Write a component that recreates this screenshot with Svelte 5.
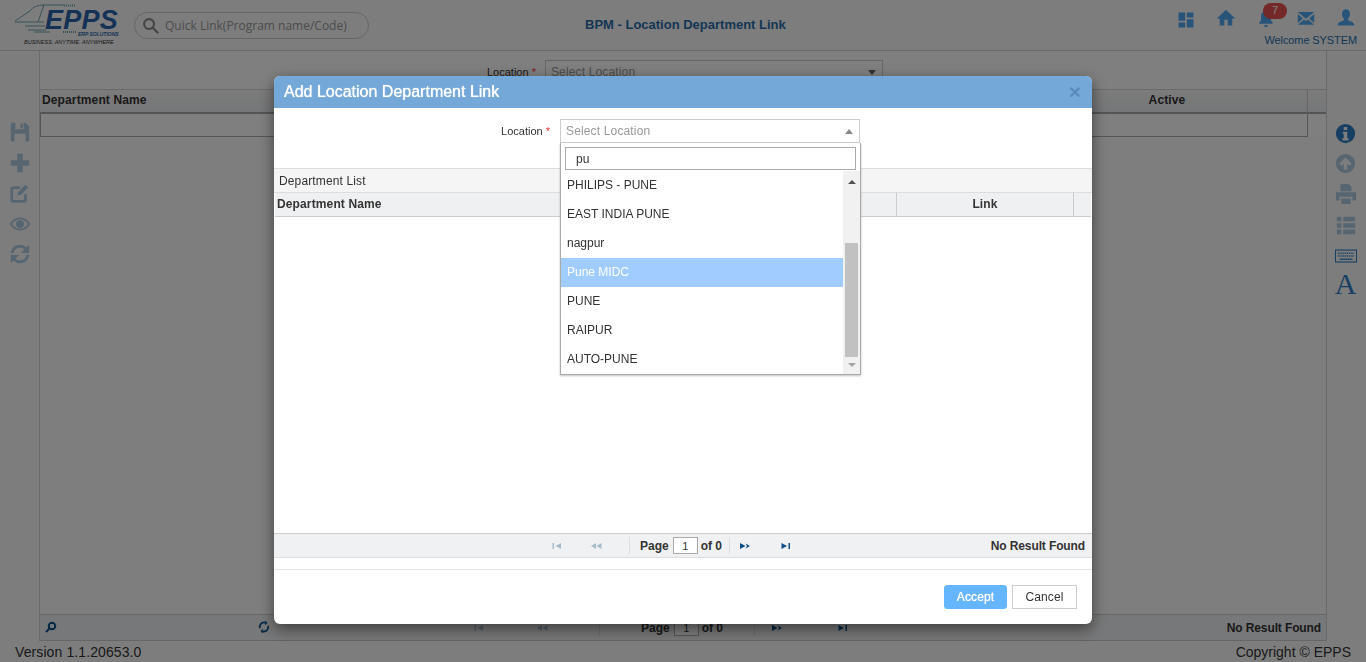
<script>
  const locations = ['PHILIPS - PUNE', 'EAST INDIA PUNE', 'nagpur', 'Pune MIDC', 'PUNE', 'RAIPUR', 'AUTO-PUNE'];

  const leftTools = [
    'M2 2h16l4 4v16H2z M7 2v7h9V2z M12.500 3h2.500v5h-2.500z M6 14v8h12v-8z',
    'M9 2h6v7h7v6h-7v7H9v-7H2V9h7z',
    null,
    'M12 5C6.500 5 2.500 8.500 1 12c1.500 3.500 5.500 7 11 7s9.500-3.500 11-7c-1.500-3.500-5.500-7-11-7z M12 6.800c-4 0-7.200 2.400-8.800 5.200 1.600 2.800 4.800 5.200 8.800 5.200s7.200-2.400 8.800-5.200c-1.600-2.800-4.800-5.200-8.800-5.200z M12 7.500a4.500 4.500 0 1 0 0 9 4.500 4.500 0 0 0 0-9z',
    null
  ];
</script>

{#snippet pagerIcon(kind, dim)}
  <svg class="pg-icon" class:dim viewBox="0 0 12 8" width="12" height="8">
    {#if kind === 'first'}
      <path d="M1.500 1h1.500v6H1.500z M10 1v6L4.500 4z" />
    {:else if kind === 'prev'}
      <path d="M6 1v6L1 4z M11.500 1v6L6.500 4z" />
    {:else if kind === 'next'}
      <path d="M1 1v6l5.500-3z M6.500 1.500 11 4 6.500 6.500 8 4z" />
    {:else}
      <path d="M1.500 1v6L7 4z M8.500 1H10v6H8.500z" />
    {/if}
  </svg>
{/snippet}

{#snippet pager(result)}
  <div class="pg-tools">
    <span class="pg-btn first">{@render pagerIcon('first', true)}</span>
    <span class="pg-btn prev">{@render pagerIcon('prev', true)}</span>
    <span class="pg-sep before"></span>
    <span class="pg-label">Page</span>
    <span class="pg-input">1</span>
    <span class="pg-label">of 0</span>
    <span class="pg-sep after"></span>
    <span class="pg-btn next">{@render pagerIcon('next', false)}</span>
    <span class="pg-btn last">{@render pagerIcon('last', false)}</span>
  </div>
  <span class="pg-result">{result}</span>
{/snippet}

<div class="page">
  <header class="topbar">
    <div class="logo">
      <svg class="logo-art" viewBox="0 0 64 34" width="64" height="34" fill="none" stroke="#6fa3b3" stroke-width="1">
        <path d="M1 19 16 9Q20 3 30 3H50" />
        <path d="M1 20H30M30 3 24 20" />
        <path d="M11 24H31M14 28H32M20 30H36" />
        <path d="M50 3.500H62M49 30H63" stroke-width="2" stroke-dasharray="1 1" />
      </svg>
      <span class="logo-name">EPPS</span>
      <span class="logo-erp">ERP SOLUTIONS</span>
      <span class="logo-tag">BUSINESS. ANYTIME. ANYWHERE</span>
    </div>
    <div class="quick">
      <svg viewBox="0 0 24 24" width="17" height="17" fill="none" stroke="#8a8a8a" stroke-width="3">
        <circle cx="10" cy="10" r="7" />
        <path d="M15 15l7 7" stroke-linecap="round" />
      </svg>
      <span>Quick Link(Program name/Code)</span>
    </div>
    <h1 class="title">BPM - Location Department Link</h1>
    <div class="top-right">
      <div class="top-icons">
        <svg class="ic-dash" viewBox="0 0 24 24" width="20" height="20"><path d="M3 13h8V3H3zm0 8h8v-6H3zm10 0h8V11h-8zm0-18v6h8V3z" /></svg>
        <svg viewBox="0 0 24 24" width="20" height="20"><path d="M10 21v-7h4v7h5.500v-8.500H23L12 2 1 12.500h3.500V21z" /></svg>
        <span class="bell">
          <svg viewBox="0 0 24 24" width="20" height="20"><path d="M12 23a2.500 2.500 0 0 0 2.500-2.500h-5A2.500 2.500 0 0 0 12 23zm8-6-2-2V10c0-3-1.600-5.600-4.500-6.300V2.500h-3v1.200C7.600 4.400 6 7 6 10v5l-2 2v2h16z" /></svg>
          <span class="badge">7</span>
        </span>
        <svg viewBox="0 0 24 24" width="18" height="18"><path d="M1 4h22L12 13z M1 6.500 8 12.500 1 18.500z M23 6.500 16 12.500 23 18.500z M1 21l8.500-7 2.500 2 2.500-2 8.500 7z" /></svg>
        <svg viewBox="0 0 24 24" width="20" height="20"><path d="M12 1.500c3 0 4.800 2.500 4.800 5.500 0 2.500-1 4.600-2.300 5.800v2c1.500 1 7.500 1.700 7.500 6.200H2c0-4.500 6-5.200 7.500-6.200v-2C8.200 11.600 7.200 9.500 7.200 7c0-3 1.800-5.500 4.800-5.500z" /></svg>
      </div>
      <div class="welcome">Welcome SYSTEM</div>
    </div>
  </header>

  <div class="middle">
    <aside class="rail rail-left">
      {#each leftTools as d, i}
        {#if i === 2}
          <svg viewBox="0 0 24 24" width="22" height="22" fill="none" stroke="#aecbe2" stroke-width="3">
            <path d="M18 13v6a2 2 0 0 1-2 2H5a2 2 0 0 1-2-2V8a2 2 0 0 1 2-2h7" />
            <path d="M9 15l1-4 8-8 3 3-8 8z" fill="#aecbe2" stroke="none" />
          </svg>
        {:else if i === 4}
          <svg viewBox="0 0 24 24" width="22" height="22" fill="none" stroke="#aecbe2" stroke-width="3">
            <path d="M3.500 11A8.500 8.500 0 0 1 18 6l2.500 3" />
            <path d="M20.500 13A8.500 8.500 0 0 1 6 18l-2.500-3" />
            <path d="M22 2v9h-9z M2 22v-9h9z" fill="#aecbe2" stroke="none" />
          </svg>
        {:else}
          <svg viewBox="0 0 24 24" width="22" height="22"><path fill="#aecbe2" fill-rule="evenodd" d={d} /></svg>
        {/if}
      {/each}
    </aside>

    <main class="content">
      <div class="bg-filter">
        <span class="bg-label">Location <em>*</em></span>
        <span class="bg-select">Select Location<i class="caret-down"></i></span>
      </div>
      <div class="bg-head">
        <span class="bg-name">Department Name</span>
        <span class="bg-active">Active</span>
        <span class="bg-end"></span>
      </div>
      <div class="bg-row"></div>
      <div class="bg-grow"></div>
      <div class="bg-pager">
        <svg class="bg-find" viewBox="0 0 24 24" width="12" height="12" fill="none" stroke="#0b4f86" stroke-width="4">
          <circle cx="14" cy="10" r="6.500" />
          <path d="M9 15l-7 7" />
        </svg>
        <svg class="bg-reload" viewBox="0 0 24 24" width="14" height="14" fill="none" stroke="#0b4f86" stroke-width="3">
          <path d="M5 14a7.500 7.500 0 0 1 9-9.500M19 10a7.500 7.500 0 0 1-9 9.500" />
          <path d="M14 1v8l4-4zM10 23v-8l-4 4z" fill="#0b4f86" stroke="none" />
        </svg>
        {@render pager('No Result Found')}
      </div>
    </main>

    <aside class="rail rail-right">
      <svg viewBox="0 0 24 24" width="21" height="21"><path fill="#2f7fc8" fill-rule="evenodd" d="M12 1a11 11 0 1 0 0 22 11 11 0 0 0 0-22z M10 4.500h4v3.500h-4z M9 10h5v7.500h1.500V20h-7v-2.500H10V12.500H9z" /></svg>
      <svg viewBox="0 0 24 24" width="21" height="21"><path fill="#aecbe2" fill-rule="evenodd" d="M12 1a11 11 0 1 0 0 22 11 11 0 0 0 0-22z M12 5l7 7-2.500 2.500-2.500-2.500v7h-4v-7l-2.500 2.500L5 12z" /></svg>
      <svg viewBox="0 0 24 24" width="22" height="22"><path fill="#aecbe2" fill-rule="evenodd" d="M6 1h9l3 3v5H6z M1 10h22v9h-4v-4H5v4H1z M7 17h10v6H7z" /></svg>
      <svg viewBox="0 0 24 24" width="22" height="22"><path fill="#aecbe2" d="M2 3h5v5H2zM9 3h13v5H9zM2 10h5v5H2zM9 10h13v5H9zM2 17h5v5H2zM9 17h13v5H9z" /></svg>
      <svg class="keyboard" viewBox="0 0 24 14" width="22" height="14" fill="none" stroke="#2f7fc8">
        <rect x="0.500" y="0.500" width="23" height="13" stroke-width="1.200" />
        <path d="M3 4h18M3 7h18" stroke-width="1.500" stroke-dasharray="1.200 .8" />
        <path d="M5 10.500h14" stroke-width="1.400" />
      </svg>
      <span class="font-a">A</span>
    </aside>
  </div>

  <footer class="statusbar">
    <span class="version">Version 1.1.20653.0</span>
    <span>Copyright © EPPS</span>
  </footer>
</div>

<div class="overlay"></div>

<section class="modal">
  <div class="modal-head">
    <h2>Add Location Department Link</h2>
    <span class="close">×</span>
  </div>
  <div class="form-row">
    <label for="loc-search">Location <em>*</em></label>
    <div class="select-wrap">
      <div class="select-box">Select Location<i class="caret-up"></i></div>
      <div class="dropdown">
        <div class="search-wrap"><input id="loc-search" value="pu" /></div>
        <div class="options">
          <ul>
            {#each locations as loc}
              <li class:active={loc === 'Pune MIDC'}>{loc}</li>
            {/each}
          </ul>
          <div class="scrollbar">
            <i class="sb-up"></i>
            <div class="sb-track"><div class="sb-thumb"></div></div>
            <i class="sb-down"></i>
          </div>
        </div>
      </div>
    </div>
  </div>
  <div class="panel-title">Department List</div>
  <div class="grid-head">
    <span class="gh-name">Department Name</span>
    <span class="gh-link">Link</span>
    <span class="gh-end"></span>
  </div>
  <div class="grid-body"></div>
  <div class="grid-pager">
    {@render pager('No Result Found')}
  </div>
  <div class="modal-gap"></div>
  <div class="modal-foot">
    <button class="btn-accept">Accept</button>
    <button class="btn-cancel">Cancel</button>
  </div>
</section>

<style>
  :global(body) {
    margin: 0;
    font-family: "Liberation Sans", Arial, sans-serif;
    color: #333;
    overflow: hidden;
  }

  .page {
    height: 662px;
    display: flex;
    flex-direction: column;
    background: #fbfbfb;
  }

  /* top bar */
  .topbar {
    height: 50px;
    flex: none;
    display: flex;
    align-items: flex-start;
    border-bottom: 1px solid #d5d5d5;
    position: relative;
  }

  .logo {
    width: 134px;
    height: 50px;
    flex: none;
    position: relative;
  }

  .logo-art { position: absolute; left: 14px; top: 2px; }

  .logo-name {
    position: absolute;
    left: 45px;
    top: 9px;
    font: italic bold 27px/22px "Liberation Sans", sans-serif;
    color: #2a64ad;
    letter-spacing: 0.2px;
  }

  .logo-erp {
    position: absolute;
    left: 78px;
    top: 31px;
    font: italic bold 5px/6px "Liberation Sans", sans-serif;
    color: #2a64ad;
  }

  .logo-tag {
    position: absolute;
    left: 24px;
    top: 39px;
    font: italic 5.500px/7px "Liberation Sans", sans-serif;
    color: #333;
    white-space: nowrap;
  }

  .quick {
    width: 235px;
    height: 27px;
    margin-top: 12px;
    box-sizing: border-box;
    border: 1px solid #ccc;
    border-radius: 14px;
    display: flex;
    align-items: center;
    gap: 6px;
    padding-left: 7px;
    font: 12px "Open Sans", sans-serif;
    color: #999;
  }

  .title {
    margin: 17px 0 0 216px;
    font-size: 13px;
    font-weight: bold;
    line-height: 16px;
    color: #2a6da8;
  }

  .top-right {
    margin-left: auto;
    width: 200px;
    flex: none;
  }

  .top-icons {
    height: 35px;
    display: grid;
    grid-template-columns: repeat(5, 40px);
    align-items: center;
    justify-items: center;
  }

  .top-icons svg { fill: #50a8f5; display: block; }
  .top-icons .ic-dash { margin-top: 4px; }

  .bell { position: relative; display: block; }

  .badge {
    position: absolute;
    left: 7px;
    top: -5px;
    width: 24px;
    height: 16px;
    border-radius: 8px;
    background: #e85050;
    color: #fff;
    font-size: 11px;
    line-height: 15px;
    text-align: center;
  }

  .welcome {
    font-size: 11px;
    line-height: 12px;
    letter-spacing: -0.1px;
    margin-top: -1px;
    text-align: right;
    padding-right: 9px;
    color: #2a6da8;
  }

  /* behind the dialog */
  .middle {
    flex: 1;
    display: flex;
    min-height: 0;
  }

  .rail {
    width: 39px;
    flex: none;
    display: flex;
    flex-direction: column;
    align-items: center;
  }

  .rail-left {
    padding-top: 70px;
    gap: 8.5px;
    border-right: 1px solid #d5d5d5;
  }

  .rail-right {
    padding-top: 72px;
    padding-right: 2px;
    box-sizing: content-box;
    width: 37px;
    gap: 9px;
    border-left: 1px solid #d5d5d5;
  }

  .keyboard { margin-top: 4px; }

  .font-a {
    font: 30px/28px "Liberation Serif", serif;
    color: #2f7fc8;
    margin-top: -2px;
  }

  .content {
    flex: 1;
    display: flex;
    flex-direction: column;
    min-width: 0;
    background: #fff;
  }

  .bg-filter {
    height: 38px;
    box-sizing: border-box;
    padding: 9px 0 0 447px;
    display: flex;
    gap: 9px;
    font-size: 11px;
  }

  .bg-label { line-height: 24px; }
  .bg-label em, label em { color: #f33; font-style: normal; }

  .bg-select {
    width: 338px;
    height: 24px;
    box-sizing: border-box;
    border: 1px solid #ccc;
    padding-left: 5px;
    line-height: 22px;
    font-size: 12px;
    letter-spacing: 0.15px;
    color: #999;
    position: relative;
  }

  .caret-down {
    position: absolute;
    right: 6px;
    top: 9px;
    border: 4px solid transparent;
    border-top: 5px solid #666;
    border-bottom: 0;
  }

  .bg-head {
    height: 20px;
    padding-bottom: 2px;
    display: flex;
    align-items: center;
    border-top: 1px solid #d5d5d5;
    border-bottom: 2px solid #aaa;
    background: linear-gradient(#f7f7f8, #eceef0);
    font-size: 12px;
    font-weight: bold;
    letter-spacing: 0.13px;
  }

  .bg-name { padding-left: 2px; }
  .bg-active { margin-left: auto; width: 280px; text-align: center; }
  .bg-end { width: 18px; align-self: stretch; border-left: 1px solid #ccc; margin-bottom: -2px; }

  .bg-row {
    height: 22px;
    margin-right: 18px;
    border: 1px solid #aaa;
    border-top: 0;
    background: #fff;
  }

  .bg-grow { flex: 1; background: #fcfcfc; }

  .bg-pager {
    height: 25px;
    flex: none;
    position: relative;
    border-top: 1px solid #ccc;
    border-bottom: 1px solid #ccc;
    background: #eff0f2;
    display: flex;
    align-items: center;
    justify-content: flex-end;
    padding-right: 5px;
  }

  .bg-find { position: absolute; left: 5px; top: 6px; }
  .bg-reload { position: absolute; left: 217px; top: 5px; }

  .bg-pager .pg-tools { left: 407px; }
  .bg-pager .pg-btn.first, .bg-pager .pg-btn.prev { width: 63px; }
  .bg-pager .pg-btn.next { width: 44px; }
  .bg-pager .pg-btn.last { width: 88px; }
  .bg-pager .pg-sep.before { margin: 0 41px 0 26px; }
  .bg-pager .pg-sep.after { margin: 0 0 0 31px; }

  .statusbar {
    height: 20px;
    flex: none;
    display: flex;
    justify-content: space-between;
    align-items: center;
    padding: 1px 15px 0;
    font-size: 14px;
    background: #fbfbfb;
  }

  .version { letter-spacing: 0.1px; }

  .overlay {
    position: fixed;
    inset: 0;
    background: rgba(0, 0, 0, 0.5);
  }

  /* dialog */
  .modal {
    position: fixed;
    left: 274px;
    top: 76px;
    width: 818px;
    height: 548px;
    display: flex;
    flex-direction: column;
    background: #fff;
    border-radius: 6px;
    box-shadow: 0 5px 15px rgba(0, 0, 0, 0.5);
  }

  .modal-head {
    height: 32px;
    flex: none;
    display: flex;
    align-items: center;
    justify-content: space-between;
    padding: 0 10px;
    background: #74a8d8;
    border-radius: 6px 6px 0 0;
  }

  .modal-head h2 {
    margin: 0;
    font-size: 16px;
    font-weight: normal;
    color: #fff;
    text-shadow: 0 0 1px #fff;
  }

  .close {
    font-size: 21px;
    font-weight: bold;
    color: #5a8cbc;
    line-height: 28px;
    margin-right: 1px;
  }

  .form-row {
    height: 60px;
    flex: none;
    display: flex;
    padding-top: 11px;
    box-sizing: border-box;
  }

  .form-row label {
    width: 276px;
    text-align: right;
    font-size: 11px;
    line-height: 24px;
    flex: none;
  }

  .select-wrap {
    margin-left: 10px;
    width: 300px;
    position: relative;
  }

  .select-box {
    height: 24px;
    box-sizing: border-box;
    border: 1px solid #ccc;
    padding-left: 5px;
    font-size: 12px;
    letter-spacing: 0.15px;
    line-height: 22px;
    color: #999;
    position: relative;
  }

  .caret-up {
    position: absolute;
    right: 6px;
    top: 9px;
    border: 4px solid transparent;
    border-bottom: 5px solid #888;
    border-top: 0;
  }

  .dropdown {
    position: absolute;
    left: 0;
    top: 24px;
    width: 301px;
    height: 232px;
    box-sizing: border-box;
    background: #fff;
    border: 1px solid #aaa;
    border-top: 0;
    box-shadow: 0 1px 2px rgba(0, 0, 0, 0.25);
    z-index: 2;
  }

  .search-wrap { padding: 4px 4px 0; }

  .search-wrap input {
    display: block;
    width: 100%;
    height: 23px;
    box-sizing: border-box;
    border: 1px solid #aaa;
    padding: 0 10px;
    font: 12px "Liberation Sans", sans-serif;
    color: #333;
    outline: none;
  }

  .options {
    display: flex;
    height: 203px;
    margin-top: 1px;
  }

  .options ul {
    flex: 1;
    margin: 0;
    padding: 0;
    list-style: none;
  }

  .options li {
    height: 29px;
    line-height: 29px;
    padding-left: 6px;
    font-size: 12px;
    color: #333;
  }

  .options li.active {
    background: #a0ccff;
    color: #fff;
  }

  .scrollbar {
    width: 17px;
    flex: none;
    display: flex;
    flex-direction: column;
    align-items: center;
    background: #f1f1f1;
  }

  .sb-up, .sb-down {
    flex: none;
    border: 4px solid transparent;
    margin: 5px 0;
    height: 0;
  }

  .sb-up { border-bottom: 4px solid #505050; border-top: 0; margin-top: 9px; margin-bottom: 0; }
  .sb-down { border-top: 4px solid #a3a3a3; border-bottom: 0; margin-top: 5px; margin-bottom: 7px; }

  .sb-track {
    flex: 1;
    width: 13px;
    display: flex;
    flex-direction: column;
    justify-content: flex-end;
    margin-bottom: 1px;
  }

  .sb-thumb { height: 114px; background: #c1c1c1; }

  .panel-title {
    height: 25px;
    flex: none;
    box-sizing: border-box;
    border-top: 1px solid #ddd;
    border-bottom: 1px solid #ddd;
    background: #f5f5f5;
    padding-left: 5px;
    font-size: 12px;
    letter-spacing: 0.13px;
    line-height: 25px;
  }

  .grid-head {
    height: 24px;
    flex: none;
    box-sizing: border-box;
    display: flex;
    align-items: stretch;
    border-bottom: 1px solid #ccc;
    background: #eff0f2;
    font-size: 12px;
    font-weight: bold;
    letter-spacing: 0.13px;
    line-height: 22px;
    margin-right: 1px;
    margin-left: 1px;
  }

  .gh-name { flex: 1; padding-left: 2px; }

  .gh-link {
    width: 176px;
    text-align: center;
    border-left: 1px solid #ccc;
    border-right: 1px solid #ccc;
  }

  .gh-end { width: 17px; }

  .grid-body { flex: 1; }

  .grid-pager {
    height: 25px;
    flex: none;
    box-sizing: border-box;
    position: relative;
    display: flex;
    align-items: center;
    justify-content: flex-end;
    padding-right: 7px;
    border-top: 1px solid #ccc;
    border-bottom: 1px solid #ddd;
    background: #f0f1f3;
  }

  .modal-gap { height: 11px; flex: none; }

  .modal-foot {
    height: 55px;
    flex: none;
    box-sizing: border-box;
    border-top: 1px solid #e5e5e5;
    display: flex;
    justify-content: flex-end;
    gap: 5px;
    padding: 15px 15px 0 0;
  }

  .modal-foot button {
    height: 24px;
    box-sizing: border-box;
    font: 12px "Liberation Sans", sans-serif;
    letter-spacing: 0.1px;
    padding: 0;
  }

  .btn-accept {
    width: 63px;
    border: 1px solid #66b5ff;
    border-radius: 3px;
    background: #66b5ff;
    color: #fff;
    text-shadow: 0 0 1px #fff;
  }

  .btn-cancel {
    width: 65px;
    border: 1px solid #ccc;
    background: #fff;
    color: #333;
  }

  /* pager, shared by both grids */
  .pg-tools {
    position: absolute;
    left: 263px;
    top: 0;
    height: 100%;
    display: flex;
    align-items: center;
    font-size: 12px;
    font-weight: bold;
  }

  .pg-btn {
    width: 39px;
    display: flex;
    justify-content: center;
  }

  .pg-btn.next { width: 30px; }
  .pg-btn.last { width: 52px; }

  .pg-icon { fill: #0b4f86; display: block; }
  .pg-icon.dim { fill: #a9bccb; }

  .pg-sep {
    width: 1px;
    height: 17px;
    background: #ddd;
  }

  .pg-sep.before { margin: 0 10px 0 14px; }
  .pg-sep.after { margin-left: 7px; }

  .pg-input {
    width: 25px;
    height: 17px;
    box-sizing: border-box;
    border: 1px solid #aaa;
    background: #fff;
    margin: 0 3px 0 4px;
    text-align: center;
    line-height: 16px;
    font-size: 11px;
    font-weight: normal;
  }

  .pg-result {
    font-size: 12px;
    font-weight: bold;
    letter-spacing: -0.12px;
  }
</style>
